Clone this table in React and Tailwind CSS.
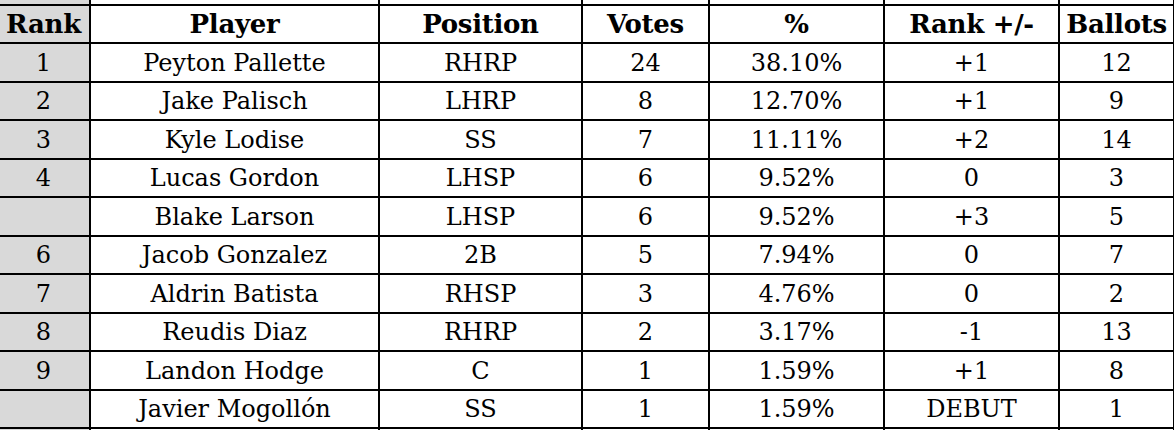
import React from "react";

const rows = [
  ["1", "Peyton Pallette", "RHRP", "24", "38.10%", "+1", "12"],
  ["2", "Jake Palisch", "LHRP", "8", "12.70%", "+1", "9"],
  ["3", "Kyle Lodise", "SS", "7", "11.11%", "+2", "14"],
  ["4", "Lucas Gordon", "LHSP", "6", "9.52%", "0", "3"],
  ["", "Blake Larson", "LHSP", "6", "9.52%", "+3", "5"],
  ["6", "Jacob Gonzalez", "2B", "5", "7.94%", "0", "7"],
  ["7", "Aldrin Batista", "RHSP", "3", "4.76%", "0", "2"],
  ["8", "Reudis Diaz", "RHRP", "2", "3.17%", "-1", "13"],
  ["9", "Landon Hodge", "C", "1", "1.59%", "+1", "8"],
  ["", "Javier Mogollón", "SS", "1", "1.59%", "DEBUT", "1"],
];

const headers = ["Rank", "Player", "Position", "Votes", "%", "Rank +/-", "Ballots"];

function Row({ cells, bold, h }) {
  return (
    <>
      {cells.map((c, i) => (
        <div
          key={i}
          className={
            "flex items-center justify-center whitespace-nowrap leading-none " +
            (i === 0 ? "bg-[#d9d9d9] " : "bg-white ") +
            (bold ? "font-bold text-[26px] tracking-[-0.3px] " : "text-[24px] ") +
            h
          }
        >
          {c}
        </div>
      ))}
    </>
  );
}

export default function App() {
  return (
    <div className="w-[1174px] h-[430px] overflow-hidden bg-white">
      <div
        className="ml-[-2px] w-[1177px] bg-black pr-[2px] text-black"
        style={{ fontFamily: '"DejaVu Serif", serif' }}
      >
        <div className="grid grid-cols-[91px_287px_201px_125px_173px_173px_113px] gap-[2px]">
          <Row cells={["", "", "", "", "", "", ""]} h="h-[4px]" />
          <Row cells={headers} bold h="h-[36px]" />
          {rows.map((r, idx) => (
            <Row key={idx} cells={r} h={idx % 2 === 0 ? "h-[37px]" : "h-[36px]"} />
          ))}
          <Row cells={["", "", "", "", "", "", ""]} h="h-[20px]" />
        </div>
      </div>
    </div>
  );
}
